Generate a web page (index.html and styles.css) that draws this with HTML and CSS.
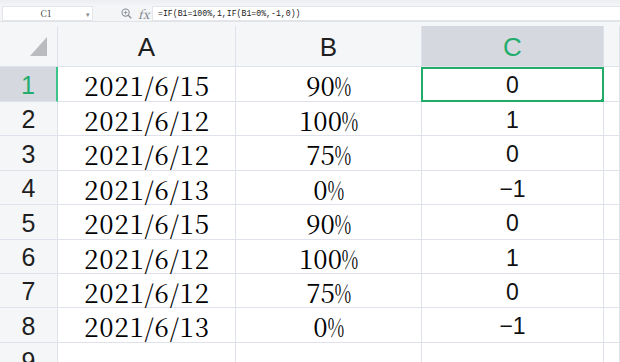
FILE: index.html
```html
<!DOCTYPE html>
<html>
<head>
<meta charset="utf-8">
<link rel="stylesheet" href="styles.css">
</head>
<body>
<div class="app">
  <div class="toolbar">
    <div class="namebox"><span class="name">C1</span><span class="caret">▾</span></div>
    <div class="tools">
      <svg class="zoom-icon" width="11" height="11" viewBox="0 0 11 11">
        <circle cx="4.6" cy="4.6" r="3.6" fill="none" stroke="#8a8f99" stroke-width="1.1"/>
        <line x1="7.3" y1="7.3" x2="10.2" y2="10.2" stroke="#8a8f99" stroke-width="1.3"/>
        <line x1="2.9" y1="4.6" x2="6.3" y2="4.6" stroke="#8a8f99" stroke-width="0.9"/>
        <line x1="4.6" y1="2.9" x2="4.6" y2="6.3" stroke="#8a8f99" stroke-width="0.9"/>
      </svg>
      <span class="fx">fx</span>
    </div>
    <div class="formula">=IF(B1=100%,1,IF(B1=0%,-1,0))</div>
  </div>
  <div class="spacer"></div>
  <div class="sheet">
    <div class="corner"><span class="tri"></span></div>
    <div class="colh">A</div>
    <div class="colh">B</div>
    <div class="colh sel">C</div>
    <div class="colh last"></div>

    <div class="rowh sel">1</div>
    <div class="cell date">2021/6/15</div>
    <div class="cell pct">90<span class="pc">%</span></div>
    <div class="cell num active">0<span class="selbox"></span><span class="handle"></span></div>
    <div class="cell last"></div>

    <div class="rowh">2</div>
    <div class="cell date">2021/6/12</div>
    <div class="cell pct">100<span class="pc">%</span></div>
    <div class="cell num">1</div>
    <div class="cell last"></div>

    <div class="rowh">3</div>
    <div class="cell date">2021/6/12</div>
    <div class="cell pct">75<span class="pc">%</span></div>
    <div class="cell num">0</div>
    <div class="cell last"></div>

    <div class="rowh">4</div>
    <div class="cell date">2021/6/13</div>
    <div class="cell pct">0<span class="pc">%</span></div>
    <div class="cell num">−1</div>
    <div class="cell last"></div>

    <div class="rowh">5</div>
    <div class="cell date">2021/6/15</div>
    <div class="cell pct">90<span class="pc">%</span></div>
    <div class="cell num">0</div>
    <div class="cell last"></div>

    <div class="rowh">6</div>
    <div class="cell date">2021/6/12</div>
    <div class="cell pct">100<span class="pc">%</span></div>
    <div class="cell num">1</div>
    <div class="cell last"></div>

    <div class="rowh">7</div>
    <div class="cell date">2021/6/12</div>
    <div class="cell pct">75<span class="pc">%</span></div>
    <div class="cell num">0</div>
    <div class="cell last"></div>

    <div class="rowh">8</div>
    <div class="cell date">2021/6/13</div>
    <div class="cell pct">0<span class="pc">%</span></div>
    <div class="cell num">−1</div>
    <div class="cell last"></div>

    <div class="rowh">9</div>
    <div class="cell"></div>
    <div class="cell"></div>
    <div class="cell"></div>
    <div class="cell last"></div>
  </div>
</div>
</body>
</html>
```

FILE: styles.css
```css
* { box-sizing: border-box; }
html, body { margin: 0; padding: 0; }
body {
  width: 620px;
  height: 362px;
  overflow: hidden;
  background: #ffffff;
  font-family: "Liberation Sans", Arial, sans-serif;
}
.app { width: 620px; height: 362px; overflow: hidden; }

.toolbar {
  height: 22px;
  background: linear-gradient(#eceef1 0px, #f4f5f7 6px, #f4f5f7 100%);
  border-bottom: 1px solid #e1e3e8;
  display: flex;
  align-items: flex-start;
  padding-top: 6px;
  padding-left: 2px;
}
.namebox {
  width: 91px;
  height: 15px;
  background: #ffffff;
  border: 1px solid #e3e5ea;
  display: flex;
  align-items: center;
  justify-content: center;
  position: relative;
  font-family: "Noto Serif CJK SC", serif;
  font-size: 9px;
  color: #333;
}
.name { margin-left: -3px; }
.caret {
  position: absolute;
  right: 2px;
  top: 2px;
  font-size: 7px;
  color: #888;
}
.tools {
  width: 59px;
  height: 15px;
  display: flex;
  align-items: center;
  padding-left: 28px;
  gap: 6px;
}
.zoom-icon { display: block; }
.fx {
  font-family: "Noto Serif CJK SC", serif;
  font-style: italic;
  font-size: 12px;
  color: #777c86;
}
.formula {
  flex: 1;
  height: 15px;
  background: #ffffff;
  border: 1px solid #e3e5ea;
  border-right: none;
  font-family: "Liberation Mono", monospace;
  font-size: 8.2px;
  line-height: 13px;
  padding-left: 5px;
  color: #222;
  white-space: nowrap;
}

.spacer { height: 4px; background: #f5f6f8; }

.sheet {
  display: grid;
  grid-template-columns: 58px 178px 186px 182px 1fr;
  grid-template-rows: 41px 35px 34px 35px 34px 35px 34px 34px 35px 35px;
}
.corner, .colh, .rowh, .cell {
  border-right: 1px solid #dfe2ea;
  border-bottom: 1px solid #dfe2ea;
}
.corner {
  background: #f5f6f8;
  position: relative;
}
.tri {
  position: absolute;
  left: 30px;
  top: 11px;
  width: 0;
  height: 0;
  border-left: 17px solid transparent;
  border-bottom: 19px solid #b9bbbe;
}
.colh {
  background: #f5f6f8;
  display: flex;
  align-items: center;
  justify-content: center;
  font-size: 26px;
  color: #1f1f1f;
  padding-top: 3px;
}
.colh.sel {
  background: #d5d8df;
  color: #23ad6c;
}
.rowh {
  background: #f5f6f8;
  display: flex;
  align-items: center;
  justify-content: center;
  font-size: 25px;
  color: #1f1f1f;
  padding-top: 2px;
}
.rowh.sel {
  background: #d5d8df;
  color: #23ad6c;
  border-right: 2px solid #3ac489;
}
.cell {
  background: #ffffff;
  display: flex;
  align-items: center;
  justify-content: center;
  color: #111111;
  padding-top: 3px;
  position: relative;
}
.cell.date {
  font-family: "Noto Serif CJK SC", serif;
  font-size: 26px;
  line-height: 1;
  letter-spacing: 0.8px;
  padding-left: 1px;
  padding-top: 2px;
  color: #000;
}
.cell.pct {
  font-family: "Noto Serif CJK SC", serif;
  font-size: 26px;
  line-height: 1;
  padding-top: 2px;
  color: #000;
}
.pc {
  display: inline-block;
  transform: scaleX(0.7);
  margin: 0 -4px;
}
.cell.num {
  font-size: 23px;
}
.selbox {
  position: absolute;
  left: -1px;
  top: 0;
  right: -1px;
  bottom: -1px;
  border: 2px solid #22ac6a;
}
.handle {
  position: absolute;
  right: -2px;
  bottom: -2px;
  width: 4px;
  height: 4px;
  background: #22ac6a;
}
```
